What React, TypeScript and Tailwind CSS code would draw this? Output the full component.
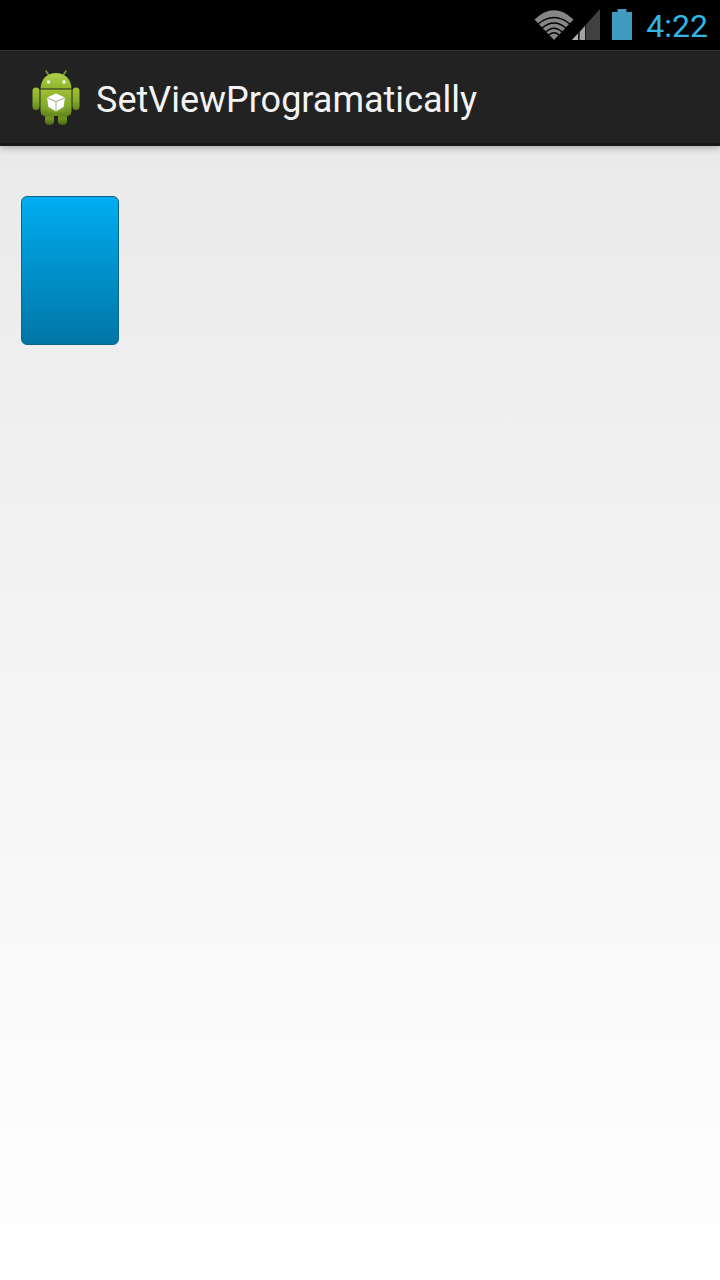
function WifiIcon() {
  return (
    <svg width="40" height="32" viewBox="0 0 40 32" aria-hidden="true">
      <path d="M0.5 10.5 Q20 -8 39.5 10.5 L20 31 Z" fill="#868686" />
      <g fill="none" stroke="#000" strokeWidth="1.3">
        <path d="M4 15 Q20 2 36 15" />
        <path d="M8 19 Q20 9 32 19" />
        <path d="M12 22.8 Q20 15.6 28 22.8" />
        <path d="M15 26 Q20 21.5 25 26" />
      </g>
    </svg>
  )
}

function SignalIcon() {
  return (
    <svg width="28" height="32" viewBox="0 0 28 32" aria-hidden="true">
      <path d="M0 31 L28 0 V31 Z" fill="#404040" />
      <path d="M0 31 L6 24.5 V31 Z" fill="#b4b4b4" />
      <path d="M8 31 V22.5 L13 17 V31 Z" fill="#a2a2a2" />
      <path d="M6.5 23.5 V31 M13.5 16 V31" stroke="#1c1c1c" strokeWidth="1" />
    </svg>
  )
}

function BatteryIcon() {
  return (
    <svg width="20" height="32" viewBox="0 0 20 32" aria-hidden="true">
      <path d="M5.5 0 H14.5 V3 H20 V31 H0 V3 H5.5 Z" fill="#409bc2" />
    </svg>
  )
}

function AndroidIcon() {
  return (
    <svg width="48" height="56" viewBox="0 0 48 56" aria-hidden="true">
      <defs>
        <linearGradient id="head" x1="0" y1="0" x2="0" y2="1">
          <stop offset="0" stopColor="#b0cf4a" />
          <stop offset="1" stopColor="#8fb52c" />
        </linearGradient>
        <linearGradient id="body" x1="0" y1="0" x2="0" y2="1">
          <stop offset="0" stopColor="#a0c335" />
          <stop offset="0.6" stopColor="#86ab2a" />
          <stop offset="1" stopColor="#5f821c" />
        </linearGradient>
        <linearGradient id="leg" x1="0" y1="0" x2="0" y2="1">
          <stop offset="0" stopColor="#5f821c" />
          <stop offset="0.6" stopColor="#6f9422" />
          <stop offset="1" stopColor="#456312" />
        </linearGradient>
        <radialGradient id="shine" cx="0.5" cy="0.5" r="0.55">
          <stop offset="0" stopColor="#a6c83c" stopOpacity="0.8" />
          <stop offset="1" stopColor="#7da324" stopOpacity="0" />
        </radialGradient>
      </defs>
      <path d="M14 1 L18 7 M34 1 L30 7" stroke="#7f9f32" strokeWidth="1.5" strokeLinecap="round" />
      <path d="M8.5 18.5 C9 8 16 3 24 3 S39 8 39.5 18.5 Z" fill="url(#head)" />
      <circle cx="16.5" cy="12" r="1.7" fill="#fff" />
      <circle cx="32" cy="12" r="1.7" fill="#fff" />
      <rect x="0.5" y="17.5" width="7" height="22.5" rx="3.5" fill="url(#body)" />
      <rect x="40.5" y="17.5" width="7" height="22.5" rx="3.5" fill="url(#body)" />
      <rect x="13" y="40" width="9" height="15" rx="4" fill="url(#leg)" />
      <rect x="26" y="40" width="9" height="15" rx="4" fill="url(#leg)" />
      <path d="M8.5 19.5 H39.5 V41 Q39.5 46 34.5 46 H13.5 Q8.5 46 8.5 41 Z" fill="url(#body)" />
      <rect x="8.5" y="19.5" width="31" height="26" rx="4" fill="url(#shine)" />
      <path d="M24 23.5 L33 27.5 L31.5 37 L24 41.5 L16.5 37 L15 27.5 Z" fill="#fff" />
      <path d="M15 27.5 L24 31.5 L33 27.5 M24 31.5 V41.5" fill="none" stroke="#9fae80" strokeWidth="1" />
    </svg>
  )
}

export default function App() {
  return (
    <div className="flex min-h-screen flex-col bg-black font-['Roboto',sans-serif]">
      <div className="flex h-[50px] items-center justify-end pr-3">
        <WifiIcon />
        <div className="-ml-0.5 flex items-center gap-3">
          <SignalIcon />
          <BatteryIcon />
        </div>
        <time className="ml-3.5 pt-0.5 text-[32px] leading-10 text-[#33b5e5]">4:22</time>
      </div>

      <header className="z-10 flex h-24 items-center gap-4 border-t border-b-3 border-t-[#303030] border-b-[#191819] bg-[#222222] pt-0.5 pl-8 shadow-[0_1px_8px_rgba(0,0,0,0.35)]">
        <AndroidIcon />
        <h1 className="pt-1 text-4xl text-[#f3f3f3]">SetViewProgramatically</h1>
      </header>

      <main className="flex-1 bg-linear-to-b from-[#eaeaea] via-[#f5f5f5] to-white px-[21px] pt-[50px]">
        <button
          type="button"
          aria-label="Button"
          className="block h-[149px] w-[98px] rounded-md border border-[#0b6588] bg-linear-to-b from-[#00adf1] to-[#0076a6]"
        />
      </main>
    </div>
  )
}
